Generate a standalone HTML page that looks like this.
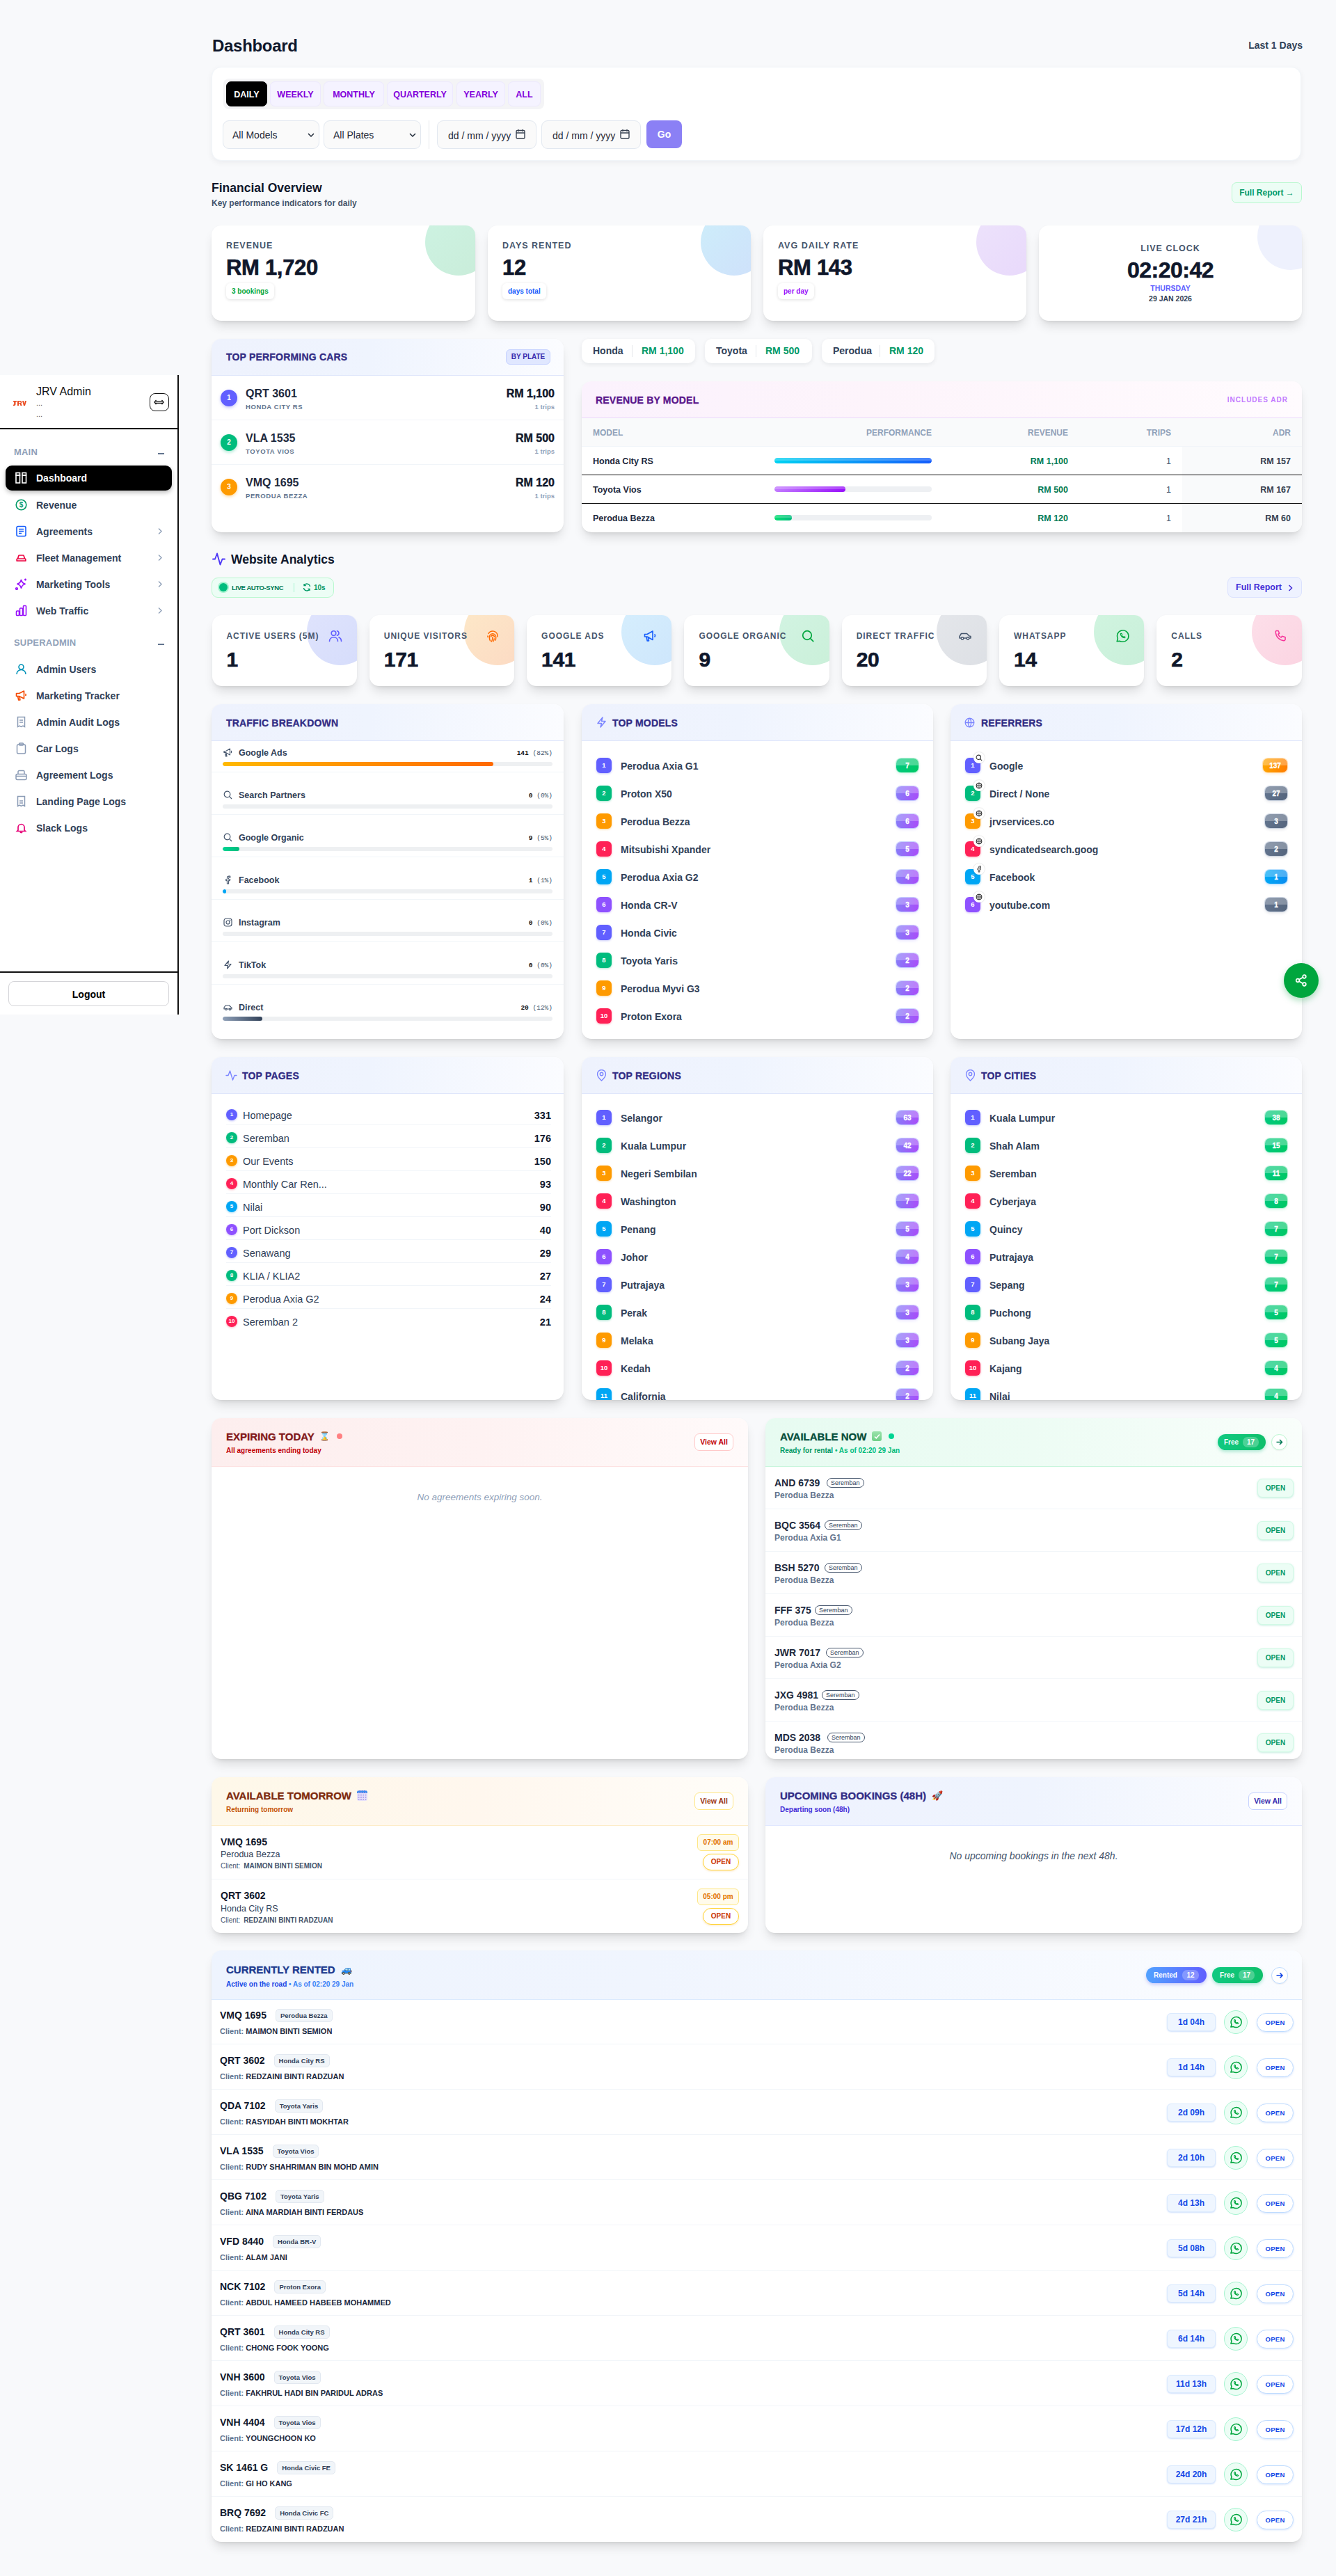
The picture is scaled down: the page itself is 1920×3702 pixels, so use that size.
<!DOCTYPE html>
<html><head><meta charset="utf-8">
<style>
*{box-sizing:border-box;margin:0;padding:0}
html,body{width:1920px;height:3702px;overflow:hidden}
body{background:#f8f9fb;font-family:"Liberation Sans",sans-serif;color:#0f172b;position:relative}
.abs{position:absolute}
.card{position:absolute;background:#fff;border-radius:14px;box-shadow:0 10px 15px -3px rgba(0,0,0,.12),0 4px 6px -4px rgba(0,0,0,.12),0 0 2px rgba(0,0,0,.04);overflow:hidden}
svg{display:block}
/* sidebar */
#side{position:absolute;left:0;top:539px;width:257px;height:919px;background:#fff;border-right:2px solid #111}
.sh{position:absolute;left:0;top:0;width:255px;height:78px;border-bottom:2px solid #111}
.sec{position:absolute;left:20px;font-size:13px;font-weight:700;color:#90a1b9;letter-spacing:.2px}
.secm{position:absolute;left:227px;width:9px;height:2px;background:#62748e}
.nav{position:absolute;left:8px;width:239px;height:35px;border-radius:9px;display:flex;align-items:center;font-size:14px;font-weight:700;color:#314158}
.nav .ic{position:absolute;left:14px;top:9px;width:17px;height:17px}
.nav .tx{position:absolute;left:44px;top:10px}
.nav .chev{position:absolute;left:218px;top:12px}
.nav.on{background:#000;color:#fff;box-shadow:0 3px 6px rgba(0,0,0,.25)}
</style></head>
<body>
<div id="side">
 <div class="sh">
  <svg class="abs" style="left:19px;top:35px" width="19" height="10" viewBox="0 0 19 10" fill="#ea4a1f"><path d="M0 2h5v1.5H3.5V7a2 2 0 01-2 2H0V7.5h1.2V3.5H0z"/><path d="M6 2h4.5a2 2 0 011 3.6L12.5 9h-2l-.9-3H8v3H6zM8 3.5V5h2a.7.7 0 000-1.5z"/><path d="M13 2h2l1 4.5L17 2h2l-2 7h-2z"/></svg>
  <div class="abs" style="left:52px;top:15px;font-size:16px;color:#111">JRV Admin</div>
  <div class="abs" style="left:52px;top:34px;font-size:11px;color:#555">...</div>
  <div class="abs" style="left:52px;top:50px;font-size:11px;color:#555">...</div>
  <div class="abs" style="left:215px;top:26px;width:28px;height:26px;border:1.5px solid #111;border-radius:8px"><svg class="abs" style="left:5px;top:8px" width="15" height="8" viewBox="0 0 15 8" fill="none" stroke="#111" stroke-width="1.3"><path d="M3.5 1L1 4l2.5 3M11.5 1L14 4l-2.5 3M2 2.7h11M2 5.3h11"/></svg></div>
 </div>
 <div class="sec" style="top:103px">MAIN</div><div class="secm" style="top:112px"></div>
 <div class="nav on" style="top:130px;height:36px">
  <svg class="ic" viewBox="0 0 17 17" fill="none" stroke="#fff" stroke-width="1.6"><rect x="1" y="1.5" width="5.5" height="3.5"/><rect x="1" y="5" width="5.5" height="11"/><rect x="10" y="1.5" width="5.5" height="3.5"/><rect x="10" y="5" width="5.5" height="11"/></svg>
  <span class="tx">Dashboard</span></div>
 <div class="nav" style="top:169px">
  <svg class="ic" viewBox="0 0 17 17" fill="none" stroke="#009966" stroke-width="1.6"><circle cx="8.5" cy="8.5" r="7.3"/><text x="8.5" y="12.2" font-size="10" font-weight="700" text-anchor="middle" fill="#009966" stroke="none" font-family="Liberation Sans">$</text></svg>
  <span class="tx">Revenue</span></div>
 <div class="nav" style="top:207px">
  <svg class="ic" viewBox="0 0 17 17" fill="none" stroke="#155dfc" stroke-width="1.6"><rect x="2" y="1.5" width="13" height="14" rx="2"/><path d="M5 5.5h7M5 8.5h7M5 11.5h4"/></svg>
  <span class="tx">Agreements</span><svg class="chev" width="8" height="11" viewBox="0 0 8 11" fill="none" stroke="#90a1b9" stroke-width="1.4"><path d="M2 1.5l4 4-4 4"/></svg></div>
 <div class="nav" style="top:245px">
  <svg class="ic" viewBox="0 0 17 17" fill="none" stroke="#ec003f" stroke-width="1.7" stroke-linejoin="round"><path d="M3.5 10l1.3-4.3a1 1 0 011-.7h5.4a1 1 0 011 .7L13.5 10"/><path d="M3 10h11a.8.8 0 01.8.8V13H2.2v-2.2A.8.8 0 013 10z"/></svg>
  <span class="tx">Fleet Management</span><svg class="chev" width="8" height="11" viewBox="0 0 8 11" fill="none" stroke="#90a1b9" stroke-width="1.4"><path d="M2 1.5l4 4-4 4"/></svg></div>
 <div class="nav" style="top:283px">
  <svg class="ic" viewBox="0 0 17 17" fill="none" stroke="#9810fa" stroke-width="1.6"><path d="M8.5 2c.8 4 2.2 5.5 6 6.3-3.8.8-5.2 2.3-6 6.2-.8-3.9-2.2-5.4-6-6.2 3.8-.8 5.2-2.3 6-6.3z"/><path d="M14.5 .5v3M13 2h3"/><circle cx="2" cy="15" r="1.3"/></svg>
  <span class="tx">Marketing Tools</span><svg class="chev" width="8" height="11" viewBox="0 0 8 11" fill="none" stroke="#90a1b9" stroke-width="1.4"><path d="M2 1.5l4 4-4 4"/></svg></div>
 <div class="nav" style="top:321px">
  <svg class="ic" viewBox="0 0 17 17" fill="none" stroke="#9810fa" stroke-width="1.6"><rect x="1.5" y="9" width="4" height="6.5" rx="1"/><rect x="6.5" y="5" width="4" height="10.5" rx="1"/><rect x="11.5" y="1.5" width="4" height="14" rx="1"/></svg>
  <span class="tx">Web Traffic</span><svg class="chev" width="8" height="11" viewBox="0 0 8 11" fill="none" stroke="#90a1b9" stroke-width="1.4"><path d="M2 1.5l4 4-4 4"/></svg></div>
 <div class="sec" style="top:377px">SUPERADMIN</div><div class="secm" style="top:386px"></div>
 <div class="nav" style="top:405px">
  <svg class="ic" viewBox="0 0 17 17" fill="none" stroke="#0092b8" stroke-width="1.6"><circle cx="8.5" cy="5.5" r="3.5"/><path d="M2 16c0-4 3-6.5 6.5-6.5S15 12 15 16"/></svg>
  <span class="tx">Admin Users</span></div>
 <div class="nav" style="top:443px">
  <svg class="ic" viewBox="0 0 17 17" fill="none" stroke="#f54a00" stroke-width="1.6" stroke-linejoin="round"><path d="M1.5 5.5h4l7-3.5v11l-7-3.5h-4z"/><path d="M3.5 9.5l1.2 5.5h2.2L6 9.5"/><path d="M14.5 6a2 2 0 010 3"/></svg>
  <span class="tx">Marketing Tracker</span></div>
 <div class="nav" style="top:481px">
  <svg class="ic" viewBox="0 0 17 17" fill="none" stroke="#8a9bb5" stroke-width="1.5"><path d="M3.5 1.5h10v14l-2.5-1.5-2.5 1.5-2.5-1.5-2.5 1.5z"/><path d="M6 6h5M6 9h5"/></svg>
  <span class="tx">Admin Audit Logs</span></div>
 <div class="nav" style="top:519px">
  <svg class="ic" viewBox="0 0 17 17" fill="none" stroke="#8a9bb5" stroke-width="1.5"><rect x="2.5" y="3" width="12" height="13" rx="2"/><rect x="5.5" y="1" width="6" height="3" rx="1"/></svg>
  <span class="tx">Car Logs</span></div>
 <div class="nav" style="top:557px">
  <svg class="ic" viewBox="0 0 17 17" fill="none" stroke="#8a9bb5" stroke-width="1.5"><rect x="1" y="7.5" width="15" height="8" rx="2"/><path d="M4 7.5V4a1.5 1.5 0 011.5-1.5h6A1.5 1.5 0 0113 4v3.5M1 10.5h15"/></svg>
  <span class="tx">Agreement Logs</span></div>
 <div class="nav" style="top:595px">
  <svg class="ic" viewBox="0 0 17 17" fill="none" stroke="#8a9bb5" stroke-width="1.5"><path d="M3.5 1.5h10v14l-2.5-1.5-2.5 1.5-2.5-1.5-2.5 1.5z"/><path d="M6 8h5M6 11h5"/></svg>
  <span class="tx">Landing Page Logs</span></div>
 <div class="nav" style="top:633px">
  <svg class="ic" viewBox="0 0 17 17" fill="none" stroke="#e60076" stroke-width="1.7"><path d="M4 12V8a4.5 4.5 0 019 0v4l1.5 1.5h-12z"/><path d="M7 14.5a1.6 1.6 0 003 0"/></svg>
  <span class="tx">Slack Logs</span></div>
 <div class="abs" style="left:0;top:857px;width:255px;border-top:2px solid #111"></div>
 <div class="abs" style="left:12px;top:871px;width:231px;height:36px;border:1px solid #d4d4d8;border-radius:8px;font-size:14px;font-weight:700;color:#000;text-align:center;line-height:36px">Logout</div>
</div>
<style>
.tabs{position:absolute;left:321px;top:113px;width:461px;height:44px;background:#f4f4f6;border-radius:8px}
.tab{position:absolute;top:4px;height:36px;border-radius:7px;background:#f5f3ff;border:1px solid #ede9fe;color:#8200db;font-size:12.5px;font-weight:700;text-align:center;line-height:36px}
.tab.on{background:#000;border-color:#000;color:#fff}
.sel{position:absolute;top:173px;height:41px;border:1px solid #e2e8f0;border-radius:9px;background:#fafafa;font-size:14px;color:#1f2937;line-height:41px;padding-left:13px}
.sel svg{position:absolute;right:6px;top:17px}
.dt{position:absolute;top:173px;height:41px;border:1px solid #e2e8f0;border-radius:9px;background:#fafafa;font-size:14px;color:#1f2937;line-height:42px;padding-left:15px}
.dt svg{position:absolute;left:112px;top:11px}
.kpi .lb{position:absolute;left:21px;top:22px;font-size:12.5px;font-weight:700;letter-spacing:1px;color:#45556c}
.kpi .val{position:absolute;left:21px;top:43px;font-size:31px;font-weight:900;color:#0f172b;letter-spacing:-.3px;-webkit-text-stroke:.6px #0f172b}
.kpi .bd{position:absolute;left:21px;top:83px;height:23px;padding:0 8px;border-radius:6px;background:#fff;box-shadow:0 1px 4px rgba(0,0,0,.13);font-size:10px;line-height:23px!important;font-weight:700;line-height:25px}
.deco{position:absolute;top:-24px;right:-24px;width:96px;height:96px;border-radius:50%}
</style>
<div class="abs" style="left:305px;top:52px;font-size:24px;font-weight:700;color:#0f172b;letter-spacing:-.3px">Dashboard</div>
<div class="abs" style="left:1706px;top:57px;width:166px;text-align:right;font-size:14px;font-weight:700;color:#314158">Last 1 Days</div>
<div class="card" style="left:304px;top:96px;width:1566px;height:135px;box-shadow:0 3px 8px rgba(15,23,42,.05);border:1px solid #f1f5f9"></div>
<div class="tabs">
 <div class="tab on" style="left:4px;width:59px">DAILY</div>
 <div class="tab" style="left:67px;width:73px">WEEKLY</div>
 <div class="tab" style="left:144px;width:87px">MONTHLY</div>
 <div class="tab" style="left:235px;width:95px">QUARTERLY</div>
 <div class="tab" style="left:335px;width:70px">YEARLY</div>
 <div class="tab" style="left:409px;width:47px">ALL</div>
</div>
<div class="sel" style="left:320px;width:139px">All Models<svg width="10" height="7" viewBox="0 0 10 7" fill="none" stroke="#1f2937" stroke-width="1.5"><path d="M1 1l4 4 4-4"/></svg></div>
<div class="sel" style="left:465px;width:140px">All Plates<svg width="10" height="7" viewBox="0 0 10 7" fill="none" stroke="#1f2937" stroke-width="1.5"><path d="M1 1l4 4 4-4"/></svg></div>
<div class="abs" style="left:616px;top:173px;width:1px;height:41px;background:#e5e7eb"></div>
<div class="dt" style="left:628px;width:143px">dd / mm / yyyy<svg width="14" height="15" viewBox="0 0 14 15" fill="none" stroke="#374151" stroke-width="1.4"><rect x="1" y="2.5" width="12" height="11.5" rx="1.5"/><path d="M1 6h12M4 1v3M10 1v3"/></svg></div>
<div class="dt" style="left:778px;width:143px">dd / mm / yyyy<svg width="14" height="15" viewBox="0 0 14 15" fill="none" stroke="#374151" stroke-width="1.4"><rect x="1" y="2.5" width="12" height="11.5" rx="1.5"/><path d="M1 6h12M4 1v3M10 1v3"/></svg></div>
<div class="abs" style="left:929px;top:173px;width:51px;height:40px;border-radius:8px;background:#8b80f5;color:#fff;font-size:14px;font-weight:700;text-align:center;line-height:41px">Go</div>

<div class="abs" style="left:304px;top:260px;font-size:17.5px;font-weight:700;color:#0f172b">Financial Overview</div>
<div class="abs" style="left:304px;top:285px;font-size:12px;font-weight:700;color:#45556c">Key performance indicators for daily</div>
<div class="abs" style="left:1770px;top:262px;width:101px;height:30px;border-radius:7px;background:#ecfdf5;border:1px solid #b9f8cf;color:#009966;font-size:12px;font-weight:700;text-align:center;line-height:28px">Full Report &#8594;</div>

<div class="card kpi" style="left:304px;top:324px;width:379px;height:137px"><div class="deco" style="background:linear-gradient(135deg,#cdf3e2,#c9ecd9)"></div>
 <div class="lb">REVENUE</div><div class="val">RM 1,720</div><div class="bd" style="color:#00a63e">3 bookings</div></div>
<div class="card kpi" style="left:701px;top:324px;width:378px;height:137px"><div class="deco" style="background:linear-gradient(135deg,#cdeefa,#cfe0fb)"></div>
 <div class="lb">DAYS RENTED</div><div class="val">12</div><div class="bd" style="color:#155dfc">days total</div></div>
<div class="card kpi" style="left:1097px;top:324px;width:378px;height:137px"><div class="deco" style="background:linear-gradient(135deg,#ede3fb,#e8d8fb)"></div>
 <div class="lb">AVG DAILY RATE</div><div class="val">RM 143</div><div class="bd" style="color:#9810fa">per day</div></div>
<div class="card kpi" style="left:1493px;top:324px;width:378px;height:137px"><div class="deco" style="background:#eef1fd;top:-32px;right:-32px"></div>
 <div class="abs" style="left:0;width:100%;top:26px;text-align:center;font-size:12.5px;font-weight:700;letter-spacing:1px;color:#45556c">LIVE CLOCK</div>
 <div class="abs" style="left:0;width:100%;top:46px;text-align:center;font-size:32px;font-weight:900;color:#0f172b;letter-spacing:-.5px;-webkit-text-stroke:.6px #0f172b">02:20:42</div>
 <div class="abs" style="left:0;width:100%;top:84px;text-align:center;font-size:10.5px;font-weight:700;color:#615fff">THURSDAY</div>
 <div class="abs" style="left:0;width:100%;top:99px;text-align:center;font-size:10.5px;font-weight:700;color:#314158">29 JAN 2026</div>
</div>
<style>
.hdr{position:absolute;left:0;top:0;width:100%;border-bottom:1px solid #dfe6fb;background:linear-gradient(90deg,#eef2fd 0%,#eff4fe 45%,#fbfcff 100%)}
.htl{position:absolute;font-size:14px;font-weight:900;color:#312c85;letter-spacing:.2px;-webkit-text-stroke:.3px currentColor}
.tpc .row{position:absolute;left:0;width:100%;height:64px;border-bottom:1px solid #f1f5f9}
.tpc .num{position:absolute;left:13px;top:20px;width:24px;height:24px;border-radius:50%;color:#fff;font-size:10px;font-weight:700;text-align:center;line-height:24px}
.tpc .pl{position:absolute;left:49px;top:17px;font-size:16px;font-weight:700;color:#1d293d}
.tpc .md{position:absolute;left:49px;top:39px;font-size:9.5px;font-weight:700;color:#62748e;letter-spacing:.6px}
.tpc .rm{position:absolute;right:13px;top:17px;font-size:16px;font-weight:900;color:#0f172b;-webkit-text-stroke:.4px #0f172b}
.tpc .tr{position:absolute;right:13px;top:39px;font-size:9.5px;font-weight:700;color:#90a1b9}
.chip{position:absolute;top:487px;height:35px;background:#fff;border-radius:10px;box-shadow:0 2px 6px rgba(15,23,42,.08);font-size:14px;font-weight:700;line-height:35px}
.chip .b{position:absolute;left:16px;color:#314158}
.chip .sep{position:absolute;top:9px;width:1px;height:17px;background:#e5e7eb}
.chip .v{position:absolute;color:#009966;font-weight:900}
.rbm .th{position:absolute;top:1px;font-size:12px;font-weight:700;color:#90a1b9;line-height:41px}
.rbm .tr2{position:absolute;left:0;width:100%;height:41px}
.rbm .c{position:absolute;font-size:12.5px;font-weight:700;line-height:42px}
.bar{position:absolute;left:277px;top:16px;width:226px;height:8px;border-radius:4px;background:#eef0f3;overflow:hidden}
.bar i{position:absolute;left:0;top:0;height:8px;border-radius:4px}
.bar i:after{content:"";position:absolute;left:0;top:0;right:0;height:4px;border-radius:4px 4px 0 0;background:rgba(255,255,255,.22)}
</style>
<!-- TOP PERFORMING CARS -->
<div class="card tpc" style="left:304px;top:487px;width:506px;height:278px">
 <div class="hdr" style="height:53px"></div>
 <div class="htl" style="left:21px;top:18px">TOP PERFORMING CARS</div>
 <div class="abs" style="left:423px;top:15px;width:64px;height:22px;border-radius:6px;background:#e0e7ff;border:1px solid #c6d2ff;color:#372aac;font-size:10px;font-weight:900;text-align:center;line-height:20px">BY PLATE</div>
 <div class="row" style="top:53px"><div class="num" style="background:#615fff;box-shadow:0 2px 4px rgba(99,102,241,.35)">1</div><div class="pl">QRT 3601</div><div class="md">HONDA CITY RS</div><div class="rm">RM 1,100</div><div class="tr">1 trips</div></div>
 <div class="row" style="top:117px"><div class="num" style="background:#00bc7d;box-shadow:0 2px 4px rgba(16,185,129,.35)">2</div><div class="pl">VLA 1535</div><div class="md">TOYOTA VIOS</div><div class="rm">RM 500</div><div class="tr">1 trips</div></div>
 <div class="row" style="top:181px;border-bottom:0"><div class="num" style="background:#fe9a00;box-shadow:0 2px 4px rgba(245,158,11,.35)">3</div><div class="pl">VMQ 1695</div><div class="md">PERODUA BEZZA</div><div class="rm">RM 120</div><div class="tr">1 trips</div></div>
</div>
<!-- BRAND CHIPS -->
<div class="chip" style="left:836px;width:163px"><span class="b">Honda</span><span class="sep" style="left:72px"></span><span class="v" style="left:86px">RM 1,100</span></div>
<div class="chip" style="left:1013px;width:154px"><span class="b">Toyota</span><span class="sep" style="left:73px"></span><span class="v" style="left:87px">RM 500</span></div>
<div class="chip" style="left:1181px;width:162px"><span class="b">Perodua</span><span class="sep" style="left:83px"></span><span class="v" style="left:97px">RM 120</span></div>
<!-- REVENUE BY MODEL -->
<div class="card rbm" style="left:836px;top:548px;width:1035px;height:217px">
 <div class="abs" style="left:0;top:0;width:100%;height:53px;border-bottom:1px solid #ead8fb;background:linear-gradient(90deg,#fbf2fd 0%,#fdf4fb 40%,#fffbfe 100%)"></div>
 <div class="htl" style="left:20px;top:19px;color:#59168b">REVENUE BY MODEL</div>
 <div class="abs" style="right:20px;top:21px;font-size:10px;font-weight:700;color:#c27aff;letter-spacing:1px">INCLUDES ADR</div>
 <div class="abs" style="left:0;top:53px;width:100%;height:41px;background:#f9fafb;border-bottom:1px solid #f1f5f9"></div>
 <div class="abs" style="left:863px;top:94px;width:172px;height:123px;background:#f9fafb"></div>
 <div class="abs" style="top:53px;left:0;width:100%;height:41px">
  <span class="th" style="left:16px">MODEL</span>
  <span class="th" style="right:532px">PERFORMANCE</span>
  <span class="th" style="right:336px">REVENUE</span>
  <span class="th" style="right:188px">TRIPS</span>
  <span class="th" style="right:16px">ADR</span>
 </div>
 <div class="tr2" style="top:94px;border-bottom:1.5px solid #111">
  <span class="c" style="left:16px;color:#1d293d">Honda City RS</span>
  <div class="bar"><i style="width:100%;background:linear-gradient(90deg,#00d3f2,#155dfc)"></i></div>
  <span class="c" style="right:336px;color:#007a55">RM 1,100</span>
  <span class="c" style="right:188px;color:#45556c;font-weight:400">1</span>
  <span class="c" style="right:16px;color:#374151">RM 157</span>
 </div>
 <div class="tr2" style="top:135px;border-bottom:1.5px solid #111">
  <span class="c" style="left:16px;color:#1d293d">Toyota Vios</span>
  <div class="bar"><i style="width:45%;background:linear-gradient(90deg,#c27aff,#9810fa)"></i></div>
  <span class="c" style="right:336px;color:#007a55">RM 500</span>
  <span class="c" style="right:188px;color:#45556c;font-weight:400">1</span>
  <span class="c" style="right:16px;color:#374151">RM 167</span>
 </div>
 <div class="tr2" style="top:176px">
  <span class="c" style="left:16px;color:#1d293d">Perodua Bezza</span>
  <div class="bar"><i style="width:11%;background:linear-gradient(90deg,#05df72,#00bc7d)"></i></div>
  <span class="c" style="right:336px;color:#007a55">RM 120</span>
  <span class="c" style="right:188px;color:#45556c;font-weight:400">1</span>
  <span class="c" style="right:16px;color:#374151">RM 60</span>
 </div>
</div>
<style>
.an .lb{position:absolute;left:21px;top:23px;font-size:12px;font-weight:700;letter-spacing:.95px;color:#45556c;white-space:nowrap}
.an .val{position:absolute;left:21px;top:47px;font-size:30px;font-weight:900;color:#0f172b;letter-spacing:-.3px;-webkit-text-stroke:.6px #0f172b}
.an .ic{position:absolute;right:21px;top:20px}
.an .deco{top:-24px;right:-24px;width:96px;height:96px}
.tb .row{position:absolute;left:0;width:100%;height:61px;border-bottom:1px solid #f1f5f9}
.tb .ic{position:absolute;left:17px;top:26px}
.tb .nm{position:absolute;left:39px;top:26px;font-size:12.5px;font-weight:700;color:#314158}
.tb .ct{position:absolute;right:16px;top:28px;font-family:"Liberation Mono",monospace;font-size:9.5px;color:#45556c}
.tb .ct b{color:#111}
.tb .track{position:absolute;left:16px;top:46px;width:474px;height:6px;border-radius:3px;background:#eef0f2;overflow:hidden}
.tb .track i{position:absolute;left:0;top:0;height:6px;border-radius:3px}
.lst .r{position:absolute;left:0;width:100%;height:40px}
.lst .rk{position:absolute;left:21px;top:9px;width:22px;height:22px;border-radius:6px;color:#fff;font-size:9.5px;font-weight:700;text-align:center;line-height:22px}
.lst .nm{position:absolute;left:56px;top:13px;font-size:14px;font-weight:700;color:#314158;white-space:nowrap}
.lst .cnt{position:absolute;right:21px;top:10px;width:32px;height:20px;border-radius:7px;color:#fff;font-size:10px;font-weight:700;text-align:center;line-height:22px;overflow:hidden;-webkit-text-stroke:.3px #fff}
.pur{background:linear-gradient(180deg,rgba(255,255,255,.26) 0 50%,transparent 50%),linear-gradient(100deg,#867ef8,#a94cf9);box-shadow:0 0 0 1px rgba(140,160,255,.45),0 2px 4px rgba(120,100,255,.18)}
.grn{background:linear-gradient(180deg,rgba(255,255,255,.3) 0 50%,transparent 50%),linear-gradient(100deg,#00c97f,#00c864);box-shadow:0 0 0 1px rgba(120,230,180,.45),0 2px 4px rgba(0,200,120,.18)}
.gry{background:linear-gradient(180deg,rgba(255,255,255,.28) 0 50%,transparent 50%),linear-gradient(100deg,#62748e,#55657d);box-shadow:0 0 0 1px rgba(170,185,210,.5),0 2px 4px rgba(70,85,110,.18)}
.org{background:linear-gradient(180deg,rgba(255,255,255,.28) 0 50%,transparent 50%),linear-gradient(100deg,#ffa800,#ff7b00);box-shadow:0 0 0 1px rgba(255,200,120,.5),0 2px 4px rgba(255,140,0,.2)}
.blu{background:linear-gradient(180deg,rgba(255,255,255,.28) 0 50%,transparent 50%),linear-gradient(100deg,#00aaf6,#0a8cf0);box-shadow:0 0 0 1px rgba(130,200,255,.5),0 2px 4px rgba(0,140,240,.2)}
.c1{background:#615fff;box-shadow:0 1px 3px rgba(99,102,241,.4)}
.c2{background:#00bc7d;box-shadow:0 1px 3px rgba(16,185,129,.4)}
.c3{background:#fe9a00;box-shadow:0 1px 3px rgba(245,158,11,.4)}
.c4{background:#ff2056;box-shadow:0 1px 3px rgba(244,63,94,.4)}
.c5{background:#00a6f4;box-shadow:0 1px 3px rgba(14,165,233,.4)}
.c6{background:#8e51ff;box-shadow:0 1px 3px rgba(139,92,246,.4)}
.ov{position:absolute;left:33px;top:1px;width:16px;height:16px;border-radius:50%;background:#fff;box-shadow:0 0 2px rgba(0,0,0,.2)}
.ov svg{position:absolute;left:3px;top:3px}
</style>
<!-- WEBSITE ANALYTICS -->
<svg class="abs" style="left:305px;top:794px" width="19" height="19" viewBox="0 0 19 19" fill="none" stroke="#4f39f6" stroke-width="1.9" stroke-linejoin="round" stroke-linecap="round"><path d="M1 9.5h3l3-8 4.5 16 3-8H18"/></svg>
<div class="abs" style="left:332px;top:794px;font-size:17.5px;font-weight:700;color:#0f172b">Website Analytics</div>
<div class="abs" style="left:304px;top:830px;width:176px;height:29px;border-radius:9px;background:#ecfdf5;border:1px solid #b9f8cf"></div>
<div class="abs" style="left:315px;top:838px;width:12px;height:12px;border-radius:50%;background:#00bc7d;box-shadow:0 0 0 2px #a4f4cf"></div>
<div class="abs" style="left:333px;top:839px;font-size:9.5px;font-weight:900;color:#007a55;letter-spacing:-.4px">LIVE AUTO-SYNC</div>
<div class="abs" style="left:422px;top:838px;width:1px;height:13px;background:#a4f4cf"></div>
<svg class="abs" style="left:435px;top:838px" width="12" height="12" viewBox="0 0 12 12" fill="none" stroke="#009966" stroke-width="1.3"><path d="M10.5 5A4.5 4.5 0 002 3.5M1.5 7A4.5 4.5 0 0010 8.5M2 1v2.7h2.7M10 11V8.3H7.3"/></svg>
<div class="abs" style="left:451px;top:839px;font-size:10px;font-weight:700;color:#009966">10s</div>
<div class="abs" style="left:1764px;top:829px;width:107px;height:30px;border-radius:8px;background:#eef2ff;border:1px solid #dbe2fe;color:#432dd7;font-size:12.5px;font-weight:700;line-height:28px;padding-left:11px">Full Report<svg class="abs" style="left:86px;top:10px" width="7" height="10" viewBox="0 0 7 10" fill="none" stroke="#432dd7" stroke-width="1.5"><path d="M1.5 1l4 4-4 4"/></svg></div>

<div class="card an" style="left:304.5px;top:884px;width:208.3px;height:102px"><div class="deco" style="background:linear-gradient(135deg,#e0e4fd,#d5dcfb)"></div><div class="lb">ACTIVE USERS (5M)</div><div class="val">1</div>
 <svg class="ic" width="20" height="20" viewBox="0 0 20 20" fill="none" stroke="#615fff" stroke-width="1.6" stroke-linecap="round"><circle cx="7.5" cy="6" r="3.3"/><path d="M1.5 17.5c0-3.5 2.7-5.8 6-5.8s6 2.3 6 5.8"/><path d="M12.5 2.8a3.3 3.3 0 010 6.4M15 12c2 .8 3.5 2.6 3.5 5.5"/></svg></div>
<div class="card an" style="left:530.8px;top:884px;width:208.3px;height:102px"><div class="deco" style="background:linear-gradient(135deg,#fde9c8,#fcd9c3)"></div><div class="lb">UNIQUE VISITORS</div><div class="val">171</div>
 <svg class="ic" width="20" height="20" viewBox="0 0 20 20" fill="none" stroke="#ff6900" stroke-width="1.5" stroke-linecap="round"><path d="M4 6.5A7 7 0 0117 9v2"/><path d="M3 10v1.5M6.5 17c-.8-1.5-1.2-3.5-1.2-5.5a4.7 4.7 0 019.4 0c0 1.5-.1 3-.5 4.5"/><path d="M10 11.5c0 2.5-.5 4.5-1.5 6.5M12.2 14c-.2 1.2-.5 2.5-1 3.5M7.6 11.3a2.4 2.4 0 014.8 0"/></svg></div>
<div class="card an" style="left:757.1px;top:884px;width:208.3px;height:102px"><div class="deco" style="background:linear-gradient(135deg,#d6effd,#cde5fc)"></div><div class="lb">GOOGLE ADS</div><div class="val">141</div>
 <svg class="ic" width="20" height="20" viewBox="0 0 20 20" fill="none" stroke="#155dfc" stroke-width="1.6" stroke-linejoin="round"><path d="M2.5 7.5h3.5l8-4.5v12.5l-8-4.5H2.5z"/><path d="M5 11l1.2 6h2.3L7.5 11"/><path d="M16.5 7.5a2.5 2.5 0 010 4"/></svg></div>
<div class="card an" style="left:983.4px;top:884px;width:208.3px;height:102px"><div class="deco" style="background:linear-gradient(135deg,#d3f4e3,#c9efd8)"></div><div class="lb">GOOGLE ORGANIC</div><div class="val">9</div>
 <svg class="ic" width="20" height="20" viewBox="0 0 20 20" fill="none" stroke="#00a63e" stroke-width="1.7" stroke-linecap="round"><circle cx="9" cy="9" r="6.3"/><path d="M13.7 13.7l4 4"/></svg></div>
<div class="card an" style="left:1209.7px;top:884px;width:208.3px;height:102px"><div class="deco" style="background:linear-gradient(135deg,#e5e7eb,#dcdfe4)"></div><div class="lb">DIRECT TRAFFIC</div><div class="val">20</div>
 <svg class="ic" width="20" height="20" viewBox="0 0 20 20" fill="none" stroke="#45556c" stroke-width="1.5" stroke-linejoin="round"><path d="M2 13v-2.5l2.5-4h8l3.5 3.5 2 .5V13z"/><circle cx="6" cy="13.5" r="1.7" fill="#fff"/><circle cx="14" cy="13.5" r="1.7" fill="#fff"/></svg></div>
<div class="card an" style="left:1436px;top:884px;width:208.3px;height:102px"><div class="deco" style="background:linear-gradient(135deg,#d1f5e0,#c8eed9)"></div><div class="lb">WHATSAPP</div><div class="val">14</div>
 <svg class="ic" width="22" height="22" viewBox="0 0 24 24" style="right:20px;top:19px" fill="none" stroke="#00a63e" stroke-width="1.7" stroke-linejoin="round"><path d="M3.5 20.5l1.3-4.2A9 9 0 1112 21a9 9 0 01-4.3-1.1z"/><path d="M9 8.5c0 3.5 3 6.5 6.5 6.5l1-1.3-2-1-.8.8c-1-.4-2.3-1.7-2.8-2.8l.8-.8-1-2L9.5 8z" stroke-width="1.2"/></svg></div>
<div class="card an" style="left:1662.3px;top:884px;width:208.3px;height:102px"><div class="deco" style="background:linear-gradient(135deg,#fde0ea,#fbd3e1)"></div><div class="lb">CALLS</div><div class="val">2</div>
 <svg class="ic" width="20" height="20" viewBox="0 0 24 24" fill="none" stroke="#f6339a" stroke-width="1.8" stroke-linejoin="round"><path d="M5 3h3.5l1.8 4.5-2.3 1.5a11 11 0 005.5 5.5l1.5-2.3L20.5 14v3.5A2.5 2.5 0 0118 20 15 15 0 014 6a2.5 2.5 0 011-3z"/></svg></div>
<!-- TRAFFIC BREAKDOWN -->
<div class="card tb" style="left:304px;top:1012px;width:506px;height:481px">
 <div class="hdr" style="height:53px"></div>
 <div class="htl" style="left:21px;top:19px">TRAFFIC BREAKDOWN</div>
 <div class="row" style="top:37px"><svg class="ic" width="13" height="13" viewBox="0 0 13 13" fill="none" stroke="#45556c" stroke-width="1.2" stroke-linejoin="round"><path d="M1 4.5h2.5l6-3.5v9l-6-3.5H1z"/><path d="M2.5 7.5l1 4.5h1.5l-1-4.5M11 4a2 2 0 010 3"/></svg><span class="nm">Google Ads</span><span class="ct"><b>141</b> (82%)</span><div class="track"><i style="width:82%;background:linear-gradient(90deg,#ffb900,#ff6900)"></i></div></div>
 <div class="row" style="top:98px"><svg class="ic" width="13" height="13" viewBox="0 0 13 13" fill="none" stroke="#45556c" stroke-width="1.2"><circle cx="5.5" cy="5.5" r="4.3"/><path d="M8.7 8.7l3.3 3.3"/></svg><span class="nm">Search Partners</span><span class="ct"><b>0</b> (0%)</span><div class="track"></div></div>
 <div class="row" style="top:159px"><svg class="ic" width="13" height="13" viewBox="0 0 13 13" fill="none" stroke="#45556c" stroke-width="1.2"><circle cx="5.5" cy="5.5" r="4.3"/><path d="M8.7 8.7l3.3 3.3"/></svg><span class="nm">Google Organic</span><span class="ct"><b>9</b> (5%)</span><div class="track"><i style="width:5%;background:linear-gradient(90deg,#00d492,#00bc7d)"></i></div></div>
 <div class="row" style="top:220px"><svg class="ic" width="13" height="13" viewBox="0 0 24 24" fill="none" stroke="#45556c" stroke-width="2" stroke-linejoin="round"><path d="M18 2h-3a5 5 0 00-5 5v3H7v4h3v8h4v-8h3l1-4h-4V7a1 1 0 011-1h3z"/></svg><span class="nm">Facebook</span><span class="ct"><b>1</b> (1%)</span><div class="track"><i style="width:1%;background:#00a6f4"></i></div></div>
 <div class="row" style="top:281px"><svg class="ic" width="13" height="13" viewBox="0 0 13 13" fill="none" stroke="#45556c" stroke-width="1.2"><rect x="1" y="1" width="11" height="11" rx="3"/><circle cx="6.5" cy="6.5" r="2.5"/><circle cx="9.6" cy="3.4" r=".3"/></svg><span class="nm">Instagram</span><span class="ct"><b>0</b> (0%)</span><div class="track"></div></div>
 <div class="row" style="top:342px"><svg class="ic" width="13" height="13" viewBox="0 0 13 13" fill="none" stroke="#45556c" stroke-width="1.2" stroke-linejoin="round"><path d="M7.5 1L2 7.5h4.5L5.5 12 11 5.5H6.5z"/></svg><span class="nm">TikTok</span><span class="ct"><b>0</b> (0%)</span><div class="track"></div></div>
 <div class="row" style="top:403px;border-bottom:0"><svg class="ic" width="13" height="13" viewBox="0 0 13 13" fill="none" stroke="#45556c" stroke-width="1.2" stroke-linejoin="round"><path d="M1 9V7l2-3h5.5l2.5 2.5 1 .5V9z"/><circle cx="4" cy="9.5" r="1.2" fill="#fff"/><circle cx="9.5" cy="9.5" r="1.2" fill="#fff"/></svg><span class="nm">Direct</span><span class="ct"><b>20</b> (12%)</span><div class="track"><i style="width:12%;background:linear-gradient(90deg,#90a1b9,#314158)"></i></div></div>
</div>
<!-- TOP MODELS -->
<div class="card lst" style="left:836px;top:1012px;width:505px;height:481px">
 <div class="hdr" style="height:53px"></div>
 <svg class="abs" style="left:21px;top:18px" width="15" height="16" viewBox="0 0 15 16" fill="none" stroke="#7c86ff" stroke-width="1.5" stroke-linejoin="round"><path d="M9 1L2 9.5h5.5L6 15l7-8.5H7.5z"/></svg>
 <div class="htl" style="left:44px;top:19px">TOP MODELS</div>
 <div class="r" style="top:68px"><div class="rk c1">1</div><span class="nm">Perodua Axia G1</span><div class="cnt grn">7</div></div>
 <div class="r" style="top:108px"><div class="rk c2">2</div><span class="nm">Proton X50</span><div class="cnt pur">6</div></div>
 <div class="r" style="top:148px"><div class="rk c3">3</div><span class="nm">Perodua Bezza</span><div class="cnt pur">6</div></div>
 <div class="r" style="top:188px"><div class="rk c4">4</div><span class="nm">Mitsubishi Xpander</span><div class="cnt pur">5</div></div>
 <div class="r" style="top:228px"><div class="rk c5">5</div><span class="nm">Perodua Axia G2</span><div class="cnt pur">4</div></div>
 <div class="r" style="top:268px"><div class="rk c6">6</div><span class="nm">Honda CR-V</span><div class="cnt pur">3</div></div>
 <div class="r" style="top:308px"><div class="rk c1">7</div><span class="nm">Honda Civic</span><div class="cnt pur">3</div></div>
 <div class="r" style="top:348px"><div class="rk c2">8</div><span class="nm">Toyota Yaris</span><div class="cnt pur">2</div></div>
 <div class="r" style="top:388px"><div class="rk c3">9</div><span class="nm">Perodua Myvi G3</span><div class="cnt pur">2</div></div>
 <div class="r" style="top:428px"><div class="rk c4">10</div><span class="nm">Proton Exora</span><div class="cnt pur">2</div></div>
</div>
<!-- REFERRERS -->
<div class="card lst" style="left:1366px;top:1012px;width:505px;height:481px">
 <div class="hdr" style="height:53px"></div>
 <svg class="abs" style="left:20px;top:19px" width="15" height="15" viewBox="0 0 15 15" fill="none" stroke="#7c86ff" stroke-width="1.3"><circle cx="7.5" cy="7.5" r="6.3"/><path d="M1.2 7.5h12.6M7.5 1.2c-3 3.5-3 9.1 0 12.6M7.5 1.2c3 3.5 3 9.1 0 12.6"/></svg>
 <div class="htl" style="left:44px;top:19px">REFERRERS</div>
 <div class="r" style="top:68px"><div class="rk c1">1</div><div class="ov"><svg width="10" height="10" viewBox="0 0 10 10" fill="none" stroke="#333" stroke-width="1.1"><circle cx="4.3" cy="4.3" r="3.2"/><path d="M6.7 6.7l2.5 2.5"/></svg></div><span class="nm">Google</span><div class="cnt org" style="width:35px">137</div></div>
 <div class="r" style="top:108px"><div class="rk c2">2</div><div class="ov"><svg width="10" height="10" viewBox="0 0 10 10" fill="none" stroke="#333" stroke-width="1"><circle cx="5" cy="5" r="4"/><path d="M1 5h8M5 1c-2 2.2-2 5.8 0 8M5 1c2 2.2 2 5.8 0 8"/></svg></div><span class="nm">Direct / None</span><div class="cnt gry">27</div></div>
 <div class="r" style="top:148px"><div class="rk c3">3</div><div class="ov"><svg width="10" height="10" viewBox="0 0 10 10" fill="none" stroke="#333" stroke-width="1"><circle cx="5" cy="5" r="4"/><path d="M1 5h8M5 1c-2 2.2-2 5.8 0 8M5 1c2 2.2 2 5.8 0 8"/></svg></div><span class="nm">jrvservices.co</span><div class="cnt gry">3</div></div>
 <div class="r" style="top:188px"><div class="rk c4">4</div><div class="ov"><svg width="10" height="10" viewBox="0 0 10 10" fill="none" stroke="#333" stroke-width="1"><circle cx="5" cy="5" r="4"/><path d="M1 5h8M5 1c-2 2.2-2 5.8 0 8M5 1c2 2.2 2 5.8 0 8"/></svg></div><span class="nm">syndicatedsearch.goog</span><div class="cnt gry">2</div></div>
 <div class="r" style="top:228px"><div class="rk c5">5</div><div class="ov"><svg width="10" height="10" viewBox="0 0 24 24" fill="none" stroke="#333" stroke-width="2.2" stroke-linejoin="round"><path d="M18 2h-3a5 5 0 00-5 5v3H7v4h3v8h4v-8h3l1-4h-4V7a1 1 0 011-1h3z"/></svg></div><span class="nm">Facebook</span><div class="cnt blu">1</div></div>
 <div class="r" style="top:268px"><div class="rk c6">6</div><div class="ov"><svg width="10" height="10" viewBox="0 0 10 10" fill="none" stroke="#333" stroke-width="1"><circle cx="5" cy="5" r="4"/><path d="M1 5h8M5 1c-2 2.2-2 5.8 0 8M5 1c2 2.2 2 5.8 0 8"/></svg></div><span class="nm">youtube.com</span><div class="cnt gry">1</div></div>
</div>
<div class="abs" style="left:1845px;top:1384px;width:50px;height:50px;border-radius:50%;background:#00a63e;box-shadow:0 4px 10px rgba(22,163,74,.35)"><svg class="abs" style="left:15px;top:15px" width="20" height="20" viewBox="0 0 20 20" fill="none" stroke="#fff" stroke-width="1.7"><circle cx="14.5" cy="4.5" r="2.3"/><circle cx="5" cy="10" r="2.3"/><circle cx="14.5" cy="15.5" r="2.3"/><path d="M7 8.8l5.5-3.2M7 11.2l5.5 3.2"/></svg></div>
<style>
.tp .r{position:absolute;left:21px;width:467px;height:33px;border-bottom:1px solid #f1f5f9}
.tp .rk{position:absolute;left:0px;top:10px;width:16px;height:16px;border-radius:50%;color:#fff;font-size:8px;font-weight:700;text-align:center;line-height:16px}
.tp .nm{position:absolute;left:24px;top:11px;font-size:14.5px;color:#314158}
.tp .v{position:absolute;right:0px;top:11px;font-size:14.5px;font-weight:700;color:#0f172b}
</style>
<!-- TOP PAGES -->
<div class="card tp" style="left:304px;top:1519px;width:506px;height:493px">
 <div class="hdr" style="height:53px"></div>
 <svg class="abs" style="left:20px;top:18px" width="17" height="17" viewBox="0 0 17 17" fill="none" stroke="#7c86ff" stroke-width="1.4" stroke-linejoin="round" stroke-linecap="round"><path d="M1 8.5h3l2.5-6.5 4 13 2.5-6.5H16"/></svg>
 <div class="htl" style="left:44px;top:19px">TOP PAGES</div>
 <div class="r" style="top:65px"><div class="rk c1">1</div><span class="nm">Homepage</span><span class="v">331</span></div>
 <div class="r" style="top:98px"><div class="rk c2">2</div><span class="nm">Seremban</span><span class="v">176</span></div>
 <div class="r" style="top:131px"><div class="rk c3">3</div><span class="nm">Our Events</span><span class="v">150</span></div>
 <div class="r" style="top:164px"><div class="rk c4">4</div><span class="nm">Monthly Car Ren...</span><span class="v">93</span></div>
 <div class="r" style="top:197px"><div class="rk c5">5</div><span class="nm">Nilai</span><span class="v">90</span></div>
 <div class="r" style="top:230px"><div class="rk c6">6</div><span class="nm">Port Dickson</span><span class="v">40</span></div>
 <div class="r" style="top:263px"><div class="rk c1">7</div><span class="nm">Senawang</span><span class="v">29</span></div>
 <div class="r" style="top:296px"><div class="rk c2">8</div><span class="nm">KLIA / KLIA2</span><span class="v">27</span></div>
 <div class="r" style="top:329px"><div class="rk c3">9</div><span class="nm">Perodua Axia G2</span><span class="v">24</span></div>
 <div class="r" style="top:362px;border-bottom:0"><div class="rk c4">10</div><span class="nm">Seremban 2</span><span class="v">21</span></div>
</div>
<!-- TOP REGIONS -->
<div class="card lst" style="left:836px;top:1519px;width:505px;height:493px">
 <div class="hdr" style="height:53px"></div>
 <svg class="abs" style="left:21px;top:18px" width="15" height="17" viewBox="0 0 15 17" fill="none" stroke="#7c86ff" stroke-width="1.4"><path d="M7.5 16s6-5.3 6-9.5a6 6 0 00-12 0c0 4.2 6 9.5 6 9.5z"/><circle cx="7.5" cy="6.5" r="2.2"/></svg>
 <div class="htl" style="left:44px;top:19px">TOP REGIONS</div>
 <div class="r" style="top:67px"><div class="rk c1">1</div><span class="nm">Selangor</span><div class="cnt pur">63</div></div>
 <div class="r" style="top:107px"><div class="rk c2">2</div><span class="nm">Kuala Lumpur</span><div class="cnt pur">42</div></div>
 <div class="r" style="top:147px"><div class="rk c3">3</div><span class="nm">Negeri Sembilan</span><div class="cnt pur">22</div></div>
 <div class="r" style="top:187px"><div class="rk c4">4</div><span class="nm">Washington</span><div class="cnt pur">7</div></div>
 <div class="r" style="top:227px"><div class="rk c5">5</div><span class="nm">Penang</span><div class="cnt pur">5</div></div>
 <div class="r" style="top:267px"><div class="rk c6">6</div><span class="nm">Johor</span><div class="cnt pur">4</div></div>
 <div class="r" style="top:307px"><div class="rk c1">7</div><span class="nm">Putrajaya</span><div class="cnt pur">3</div></div>
 <div class="r" style="top:347px"><div class="rk c2">8</div><span class="nm">Perak</span><div class="cnt pur">3</div></div>
 <div class="r" style="top:387px"><div class="rk c3">9</div><span class="nm">Melaka</span><div class="cnt pur">3</div></div>
 <div class="r" style="top:427px"><div class="rk c4">10</div><span class="nm">Kedah</span><div class="cnt pur">2</div></div>
 <div class="r" style="top:467px"><div class="rk c5">11</div><span class="nm">California</span><div class="cnt pur">2</div></div>
</div>
<!-- TOP CITIES -->
<div class="card lst" style="left:1366px;top:1519px;width:505px;height:493px">
 <div class="hdr" style="height:53px"></div>
 <svg class="abs" style="left:21px;top:18px" width="15" height="17" viewBox="0 0 15 17" fill="none" stroke="#7c86ff" stroke-width="1.4"><path d="M7.5 16s6-5.3 6-9.5a6 6 0 00-12 0c0 4.2 6 9.5 6 9.5z"/><circle cx="7.5" cy="6.5" r="2.2"/></svg>
 <div class="htl" style="left:44px;top:19px">TOP CITIES</div>
 <div class="r" style="top:67px"><div class="rk c1">1</div><span class="nm">Kuala Lumpur</span><div class="cnt grn">38</div></div>
 <div class="r" style="top:107px"><div class="rk c2">2</div><span class="nm">Shah Alam</span><div class="cnt grn">15</div></div>
 <div class="r" style="top:147px"><div class="rk c3">3</div><span class="nm">Seremban</span><div class="cnt grn">11</div></div>
 <div class="r" style="top:187px"><div class="rk c4">4</div><span class="nm">Cyberjaya</span><div class="cnt grn">8</div></div>
 <div class="r" style="top:227px"><div class="rk c5">5</div><span class="nm">Quincy</span><div class="cnt grn">7</div></div>
 <div class="r" style="top:267px"><div class="rk c6">6</div><span class="nm">Putrajaya</span><div class="cnt grn">7</div></div>
 <div class="r" style="top:307px"><div class="rk c1">7</div><span class="nm">Sepang</span><div class="cnt grn">7</div></div>
 <div class="r" style="top:347px"><div class="rk c2">8</div><span class="nm">Puchong</span><div class="cnt grn">5</div></div>
 <div class="r" style="top:387px"><div class="rk c3">9</div><span class="nm">Subang Jaya</span><div class="cnt grn">5</div></div>
 <div class="r" style="top:427px"><div class="rk c4">10</div><span class="nm">Kajang</span><div class="cnt grn">4</div></div>
 <div class="r" style="top:467px"><div class="rk c5">11</div><span class="nm">Nilai</span><div class="cnt grn">4</div></div>
</div>
<style>
.bh{position:absolute;left:0;top:0;width:100%}
.bt{position:absolute;left:21px;top:16px;height:20px;font-size:15px;font-weight:900;letter-spacing:0;white-space:nowrap;-webkit-text-stroke:.3px currentColor}
.bs{position:absolute;left:21px;top:41px;font-size:10px;font-weight:700;white-space:nowrap}
.va{position:absolute;top:22px;right:21px;width:56px;height:25px;border-radius:7px;background:#fff;font-size:10.5px;font-weight:700;text-align:center;line-height:23px}
.av .r{position:absolute;left:0;width:100%;height:61px;border-bottom:1px solid #f1f5f9}
.av .pl{position:absolute;left:13px;top:15px;font-size:14px;font-weight:700;color:#1d293d}
.av .loc{position:absolute;top:16px;height:14px;border:1px solid #45556c;border-radius:7px;font-size:9px;color:#314158;line-height:12px;padding:0 5px}
.av .md{position:absolute;left:13px;top:34px;font-size:12px;font-weight:700;color:#62748e}
.av .op{position:absolute;right:12px;top:17px;width:52px;height:27px;border-radius:7px;background:#ecfdf5;border:1px solid #d1fae5;box-shadow:0 1px 3px rgba(16,185,129,.25);color:#009966;font-size:10px;font-weight:700;text-align:center;line-height:25px}
.cr .r{position:absolute;left:0;width:100%;height:65px;border-bottom:1px solid #f1f5f9}
.cr .pl{position:absolute;left:12px;top:13px;height:20px;display:flex;align-items:center;font-size:14px;font-weight:700;color:#0f172b;white-space:nowrap}
.cr .mc{margin-left:13px;height:19px;border:1px solid #e2e8f0;background:#f1f5f9;border-radius:5px;font-size:9.5px;font-weight:700;color:#314158;line-height:17px;padding:0 6px}
.cr .cl{position:absolute;left:12px;top:40px;font-size:11px;font-weight:700;color:#1d293d;white-space:nowrap}
.cr .cl span{color:#62748e}
.cr .du{position:absolute;right:124px;top:20px;width:70px;height:26px;border-radius:6px;background:#eff6ff;border:1px solid #dbeafe;box-shadow:0 1px 2px rgba(59,130,246,.25);color:#1447e6;font-size:12px;font-weight:700;text-align:center;line-height:24px}
.cr .wa{position:absolute;right:78px;top:16px;width:34px;height:34px;border-radius:50%;background:#ecfdf5;border:1px solid #a4f4cf}
.cr .wa svg{position:absolute;left:6px;top:6px}
.cr .op{position:absolute;right:12px;top:20px;width:53px;height:27px;border-radius:14px;background:#fff;border:1px solid #bedbff;box-shadow:0 1px 3px rgba(59,130,246,.2);color:#1447e6;font-size:9.5px;font-weight:700;text-align:center;line-height:25px;letter-spacing:.3px}
</style>
<!-- EXPIRING TODAY -->
<div class="card" style="left:304px;top:2038px;width:771px;height:490px">
 <div class="bh" style="height:70px;border-bottom:1px solid #fde2e2;background:linear-gradient(90deg,#fdeeee 0%,#fef2f2 50%,#fffafa 100%)"></div>
 <div class="bt" style="color:#82181a;display:flex;align-items:center">EXPIRING TODAY<span style="font-size:12px;letter-spacing:0;margin-left:7px">&#8987;</span><span style="margin-left:10px;width:8px;height:8px;border-radius:50%;background:#ff6467;opacity:.8"></span></div>
 <div class="bs" style="color:#c10007">All agreements ending today</div>
 <div class="va" style="border:1px solid #ffc9c9;color:#c10007">View All</div>
 <div class="abs" style="left:0;width:100%;top:106px;text-align:center;font-size:13.5px;font-style:italic;color:#90a1b9">No agreements expiring soon.</div>
</div>
<!-- AVAILABLE NOW -->
<div class="card av" style="left:1100px;top:2038px;width:771px;height:490px">
 <div class="bh" style="height:70px;border-bottom:1px solid #c8f5dc;background:linear-gradient(90deg,#e7fbf1 0%,#edfcf4 50%,#f9fefb 100%)"></div>
 <div class="bt" style="color:#064e3b;display:flex;align-items:center">AVAILABLE NOW<span style="position:relative;margin-left:8px;width:14px;height:14px;border-radius:3px;background:linear-gradient(180deg,#9be3ab,#6fcf87)"><svg class="abs" style="left:3px;top:3px" width="9" height="9" viewBox="0 0 9 9" fill="none" stroke="#fff" stroke-width="1.6"><path d="M1 4.5l2.3 2.3L8 1.5"/></svg></span><span style="margin-left:10px;width:8px;height:8px;border-radius:50%;background:#00d492"></span></div>
 <div class="bs" style="color:#009966">Ready for rental <span style="color:#00bc7d;font-weight:700">&#8226; As of 02:20 29 Jan</span></div>
 <div class="abs" style="left:650px;top:23px;width:69px;height:23px;border-radius:12px;background:linear-gradient(90deg,#10c981,#0fbf6a);box-shadow:0 2px 5px rgba(16,185,129,.35);color:#fff;font-size:10px;font-weight:700;line-height:23px;padding-left:9px">Free<span class="abs" style="left:36px;top:4px;width:23px;height:15px;border-radius:7px;background:rgba(255,255,255,.25);text-align:center;line-height:15px">17</span></div>
 <div class="abs" style="left:727px;top:23px;width:23px;height:23px;border-radius:50%;background:#fff;border:1px solid #b9f8cf;box-shadow:0 1px 2px rgba(0,0,0,.06)"><svg class="abs" style="left:5px;top:5px" width="11" height="11" viewBox="0 0 11 11" fill="none" stroke="#007a55" stroke-width="1.5"><path d="M1.5 5.5h8M6 2l3.5 3.5L6 9"/></svg></div>
 <div class="r" style="top:70px"><span class="pl">AND 6739</span><span class="loc" style="left:88px">Seremban</span><span class="md">Perodua Bezza</span><div class="op">OPEN</div></div>
 <div class="r" style="top:131px"><span class="pl">BQC 3564</span><span class="loc" style="left:85px">Seremban</span><span class="md">Perodua Axia G1</span><div class="op">OPEN</div></div>
 <div class="r" style="top:192px"><span class="pl">BSH 5270</span><span class="loc" style="left:85px">Seremban</span><span class="md">Perodua Bezza</span><div class="op">OPEN</div></div>
 <div class="r" style="top:253px"><span class="pl">FFF 375</span><span class="loc" style="left:71px">Seremban</span><span class="md">Perodua Bezza</span><div class="op">OPEN</div></div>
 <div class="r" style="top:314px"><span class="pl">JWR 7017</span><span class="loc" style="left:87px">Seremban</span><span class="md">Perodua Axia G2</span><div class="op">OPEN</div></div>
 <div class="r" style="top:375px"><span class="pl">JXG 4981</span><span class="loc" style="left:81px">Seremban</span><span class="md">Perodua Bezza</span><div class="op">OPEN</div></div>
 <div class="r" style="top:436px"><span class="pl">MDS 2038</span><span class="loc" style="left:89px">Seremban</span><span class="md">Perodua Bezza</span><div class="op">OPEN</div></div>
</div>
<!-- AVAILABLE TOMORROW -->
<div class="card" style="left:304px;top:2554px;width:771px;height:224px">
 <div class="bh" style="height:70px;border-bottom:1px solid #fdecc8;background:linear-gradient(90deg,#fef8e9 0%,#fff7ee 50%,#fffdf9 100%)"></div>
 <div class="bt" style="color:#7e2a0c;display:flex;align-items:center">AVAILABLE TOMORROW<span style="margin-left:8px;width:15px;height:15px;border-radius:3px;background:radial-gradient(circle,#a89be8 0.8px,transparent 1.2px) 1px 5px/3.3px 3.3px,linear-gradient(180deg,#3b8cf0 0 28%,#e6e0fb 28%)"></span></div>
 <div class="bs" style="color:#c4540c">Returning tomorrow</div>
 <div class="va" style="border:1px solid #fee685;color:#9a3412">View All</div>
 <div class="abs" style="left:0;top:69px;width:100%;height:78px;border-bottom:1px solid #f1f5f9"></div>
 <div class="abs" style="left:13px;top:85px;font-size:14px;font-weight:700;color:#0f172b">VMQ 1695</div>
 <div class="abs" style="left:13px;top:104px;font-size:12.5px;color:#314158">Perodua Bezza</div>
 <div class="abs" style="left:13px;top:122px;font-size:10px;color:#45556c;white-space:nowrap">Client: <b style="margin-left:2px">MAIMON BINTI SEMION</b></div>
 <div class="abs" style="left:698px;top:82px;width:60px;height:24px;border-radius:6px;background:#fffbeb;border:1px solid #fee685;color:#e17100;font-size:10px;font-weight:700;text-align:center;line-height:22px">07:00 am</div>
 <div class="abs" style="left:706px;top:110px;width:52px;height:24px;border-radius:12px;background:#fff;border:1px solid #ffd230;box-shadow:0 1px 3px rgba(245,158,11,.25);color:#ca3500;font-size:10px;font-weight:700;text-align:center;line-height:22px">OPEN</div>
 <div class="abs" style="left:13px;top:162px;font-size:14px;font-weight:700;color:#0f172b">QRT 3602</div>
 <div class="abs" style="left:13px;top:182px;font-size:12.5px;color:#314158">Honda City RS</div>
 <div class="abs" style="left:13px;top:200px;font-size:10px;color:#45556c;white-space:nowrap">Client: <b style="margin-left:2px">REDZAINI BINTI RADZUAN</b></div>
 <div class="abs" style="left:698px;top:160px;width:60px;height:24px;border-radius:6px;background:#fffbeb;border:1px solid #fee685;color:#e17100;font-size:10px;font-weight:700;text-align:center;line-height:22px">05:00 pm</div>
 <div class="abs" style="left:706px;top:188px;width:52px;height:24px;border-radius:12px;background:#fff;border:1px solid #ffd230;box-shadow:0 1px 3px rgba(245,158,11,.25);color:#ca3500;font-size:10px;font-weight:700;text-align:center;line-height:22px">OPEN</div>
</div>
<!-- UPCOMING BOOKINGS -->
<div class="card" style="left:1100px;top:2554px;width:771px;height:224px">
 <div class="bh" style="height:70px;border-bottom:1px solid #e0e7ff;background:linear-gradient(90deg,#eef2fe 0%,#eff4fe 50%,#fbfcff 100%)"></div>
 <div class="bt" style="color:#312c85;display:flex;align-items:center">UPCOMING BOOKINGS (48H)<span style="margin-left:8px;font-size:13px;letter-spacing:0">&#128640;</span></div>
 <div class="bs" style="color:#432dd7">Departing soon (48h)</div>
 <div class="va" style="border:1px solid #c6d2ff;color:#372aac">View All</div>
 <div class="abs" style="left:0;width:100%;top:105px;text-align:center;font-size:14px;font-style:italic;color:#45556c">No upcoming bookings in the next 48h.</div>
</div>
<!-- CURRENTLY RENTED -->
<div class="card cr" style="left:304px;top:2803px;width:1567px;height:850px">
 <div class="bh" style="height:71px;border-bottom:1px solid #dbeafe;background:linear-gradient(90deg,#eef4fe 0%,#f0f5fe 40%,#fafcff 100%)"></div>
 <div class="bt" style="color:#1c398e;display:flex;align-items:center;top:17px">CURRENTLY RENTED<span style="margin-left:8px;font-size:13px;letter-spacing:0">&#128665;</span></div>
 <div class="bs" style="color:#1447e6;top:43px">Active on the road <span style="color:#3b82f6">&#8226; As of 02:20 29 Jan</span></div>
 <div class="abs" style="left:1343px;top:24px;width:87px;height:23px;border-radius:12px;background:linear-gradient(90deg,#51a2ff,#615fff);box-shadow:0 2px 5px rgba(99,102,241,.35);color:#fff;font-size:10px;font-weight:700;line-height:23px;padding-left:11px">Rented<span class="abs" style="left:52px;top:4px;width:24px;height:15px;border-radius:7px;background:rgba(255,255,255,.25);text-align:center;line-height:15px">12</span></div>
 <div class="abs" style="left:1438px;top:24px;width:73px;height:23px;border-radius:12px;background:linear-gradient(90deg,#10c981,#0fbf6a);box-shadow:0 2px 5px rgba(16,185,129,.35);color:#fff;font-size:10px;font-weight:700;line-height:23px;padding-left:11px">Free<span class="abs" style="left:38px;top:4px;width:23px;height:15px;border-radius:7px;background:rgba(255,255,255,.25);text-align:center;line-height:15px">17</span></div>
 <div class="abs" style="left:1523px;top:24px;width:24px;height:24px;border-radius:50%;background:#fff;border:1px solid #bedbff;box-shadow:0 1px 2px rgba(0,0,0,.06)"><svg class="abs" style="left:5px;top:5px" width="12" height="12" viewBox="0 0 12 12" fill="none" stroke="#1447e6" stroke-width="1.6"><path d="M1.5 6h8.5M6.5 2.5L10 6l-3.5 3.5"/></svg></div>
 <div class="r" style="top:70px"><div class="pl">VMQ 1695<span class="mc">Perodua Bezza</span></div><div class="cl"><span>Client:</span> MAIMON BINTI SEMION</div><div class="du">1d 04h</div><div class="wa"><svg width="20" height="20" viewBox="0 0 24 24" fill="none" stroke="#00a63e" stroke-width="1.8" stroke-linejoin="round"><path d="M3.5 20.5l1.3-4.2A9 9 0 1112 21a9 9 0 01-4.3-1.1z"/><path d="M9 8.5c0 3.5 3 6.5 6.5 6.5l1-1.3-2-1-.8.8c-1-.4-2.3-1.7-2.8-2.8l.8-.8-1-2L9.5 8z" stroke-width="1.3"/></svg></div><div class="op">OPEN</div></div>
 <div class="r" style="top:135px"><div class="pl">QRT 3602<span class="mc">Honda City RS</span></div><div class="cl"><span>Client:</span> REDZAINI BINTI RADZUAN</div><div class="du">1d 14h</div><div class="wa"><svg width="20" height="20" viewBox="0 0 24 24" fill="none" stroke="#00a63e" stroke-width="1.8" stroke-linejoin="round"><path d="M3.5 20.5l1.3-4.2A9 9 0 1112 21a9 9 0 01-4.3-1.1z"/><path d="M9 8.5c0 3.5 3 6.5 6.5 6.5l1-1.3-2-1-.8.8c-1-.4-2.3-1.7-2.8-2.8l.8-.8-1-2L9.5 8z" stroke-width="1.3"/></svg></div><div class="op">OPEN</div></div>
 <div class="r" style="top:200px"><div class="pl">QDA 7102<span class="mc">Toyota Yaris</span></div><div class="cl"><span>Client:</span> RASYIDAH BINTI MOKHTAR</div><div class="du">2d 09h</div><div class="wa"><svg width="20" height="20" viewBox="0 0 24 24" fill="none" stroke="#00a63e" stroke-width="1.8" stroke-linejoin="round"><path d="M3.5 20.5l1.3-4.2A9 9 0 1112 21a9 9 0 01-4.3-1.1z"/><path d="M9 8.5c0 3.5 3 6.5 6.5 6.5l1-1.3-2-1-.8.8c-1-.4-2.3-1.7-2.8-2.8l.8-.8-1-2L9.5 8z" stroke-width="1.3"/></svg></div><div class="op">OPEN</div></div>
 <div class="r" style="top:265px"><div class="pl">VLA 1535<span class="mc">Toyota Vios</span></div><div class="cl"><span>Client:</span> RUDY SHAHRIMAN BIN MOHD AMIN</div><div class="du">2d 10h</div><div class="wa"><svg width="20" height="20" viewBox="0 0 24 24" fill="none" stroke="#00a63e" stroke-width="1.8" stroke-linejoin="round"><path d="M3.5 20.5l1.3-4.2A9 9 0 1112 21a9 9 0 01-4.3-1.1z"/><path d="M9 8.5c0 3.5 3 6.5 6.5 6.5l1-1.3-2-1-.8.8c-1-.4-2.3-1.7-2.8-2.8l.8-.8-1-2L9.5 8z" stroke-width="1.3"/></svg></div><div class="op">OPEN</div></div>
 <div class="r" style="top:330px"><div class="pl">QBG 7102<span class="mc">Toyota Yaris</span></div><div class="cl"><span>Client:</span> AINA MARDIAH BINTI FERDAUS</div><div class="du">4d 13h</div><div class="wa"><svg width="20" height="20" viewBox="0 0 24 24" fill="none" stroke="#00a63e" stroke-width="1.8" stroke-linejoin="round"><path d="M3.5 20.5l1.3-4.2A9 9 0 1112 21a9 9 0 01-4.3-1.1z"/><path d="M9 8.5c0 3.5 3 6.5 6.5 6.5l1-1.3-2-1-.8.8c-1-.4-2.3-1.7-2.8-2.8l.8-.8-1-2L9.5 8z" stroke-width="1.3"/></svg></div><div class="op">OPEN</div></div>
 <div class="r" style="top:395px"><div class="pl">VFD 8440<span class="mc">Honda BR-V</span></div><div class="cl"><span>Client:</span> ALAM JANI</div><div class="du">5d 08h</div><div class="wa"><svg width="20" height="20" viewBox="0 0 24 24" fill="none" stroke="#00a63e" stroke-width="1.8" stroke-linejoin="round"><path d="M3.5 20.5l1.3-4.2A9 9 0 1112 21a9 9 0 01-4.3-1.1z"/><path d="M9 8.5c0 3.5 3 6.5 6.5 6.5l1-1.3-2-1-.8.8c-1-.4-2.3-1.7-2.8-2.8l.8-.8-1-2L9.5 8z" stroke-width="1.3"/></svg></div><div class="op">OPEN</div></div>
 <div class="r" style="top:460px"><div class="pl">NCK 7102<span class="mc">Proton Exora</span></div><div class="cl"><span>Client:</span> ABDUL HAMEED HABEEB MOHAMMED</div><div class="du">5d 14h</div><div class="wa"><svg width="20" height="20" viewBox="0 0 24 24" fill="none" stroke="#00a63e" stroke-width="1.8" stroke-linejoin="round"><path d="M3.5 20.5l1.3-4.2A9 9 0 1112 21a9 9 0 01-4.3-1.1z"/><path d="M9 8.5c0 3.5 3 6.5 6.5 6.5l1-1.3-2-1-.8.8c-1-.4-2.3-1.7-2.8-2.8l.8-.8-1-2L9.5 8z" stroke-width="1.3"/></svg></div><div class="op">OPEN</div></div>
 <div class="r" style="top:525px"><div class="pl">QRT 3601<span class="mc">Honda City RS</span></div><div class="cl"><span>Client:</span> CHONG FOOK YOONG</div><div class="du">6d 14h</div><div class="wa"><svg width="20" height="20" viewBox="0 0 24 24" fill="none" stroke="#00a63e" stroke-width="1.8" stroke-linejoin="round"><path d="M3.5 20.5l1.3-4.2A9 9 0 1112 21a9 9 0 01-4.3-1.1z"/><path d="M9 8.5c0 3.5 3 6.5 6.5 6.5l1-1.3-2-1-.8.8c-1-.4-2.3-1.7-2.8-2.8l.8-.8-1-2L9.5 8z" stroke-width="1.3"/></svg></div><div class="op">OPEN</div></div>
 <div class="r" style="top:590px"><div class="pl">VNH 3600<span class="mc">Toyota Vios</span></div><div class="cl"><span>Client:</span> FAKHRUL HADI BIN PARIDUL ADRAS</div><div class="du">11d 13h</div><div class="wa"><svg width="20" height="20" viewBox="0 0 24 24" fill="none" stroke="#00a63e" stroke-width="1.8" stroke-linejoin="round"><path d="M3.5 20.5l1.3-4.2A9 9 0 1112 21a9 9 0 01-4.3-1.1z"/><path d="M9 8.5c0 3.5 3 6.5 6.5 6.5l1-1.3-2-1-.8.8c-1-.4-2.3-1.7-2.8-2.8l.8-.8-1-2L9.5 8z" stroke-width="1.3"/></svg></div><div class="op">OPEN</div></div>
 <div class="r" style="top:655px"><div class="pl">VNH 4404<span class="mc">Toyota Vios</span></div><div class="cl"><span>Client:</span> YOUNGCHOON KO</div><div class="du">17d 12h</div><div class="wa"><svg width="20" height="20" viewBox="0 0 24 24" fill="none" stroke="#00a63e" stroke-width="1.8" stroke-linejoin="round"><path d="M3.5 20.5l1.3-4.2A9 9 0 1112 21a9 9 0 01-4.3-1.1z"/><path d="M9 8.5c0 3.5 3 6.5 6.5 6.5l1-1.3-2-1-.8.8c-1-.4-2.3-1.7-2.8-2.8l.8-.8-1-2L9.5 8z" stroke-width="1.3"/></svg></div><div class="op">OPEN</div></div>
 <div class="r" style="top:720px"><div class="pl">SK 1461 G<span class="mc">Honda Civic FE</span></div><div class="cl"><span>Client:</span> GI HO KANG</div><div class="du">24d 20h</div><div class="wa"><svg width="20" height="20" viewBox="0 0 24 24" fill="none" stroke="#00a63e" stroke-width="1.8" stroke-linejoin="round"><path d="M3.5 20.5l1.3-4.2A9 9 0 1112 21a9 9 0 01-4.3-1.1z"/><path d="M9 8.5c0 3.5 3 6.5 6.5 6.5l1-1.3-2-1-.8.8c-1-.4-2.3-1.7-2.8-2.8l.8-.8-1-2L9.5 8z" stroke-width="1.3"/></svg></div><div class="op">OPEN</div></div>
 <div class="r" style="top:785px;border-bottom:0"><div class="pl">BRQ 7692<span class="mc">Honda Civic FC</span></div><div class="cl"><span>Client:</span> REDZAINI BINTI RADZUAN</div><div class="du">27d 21h</div><div class="wa"><svg width="20" height="20" viewBox="0 0 24 24" fill="none" stroke="#00a63e" stroke-width="1.8" stroke-linejoin="round"><path d="M3.5 20.5l1.3-4.2A9 9 0 1112 21a9 9 0 01-4.3-1.1z"/><path d="M9 8.5c0 3.5 3 6.5 6.5 6.5l1-1.3-2-1-.8.8c-1-.4-2.3-1.7-2.8-2.8l.8-.8-1-2L9.5 8z" stroke-width="1.3"/></svg></div><div class="op">OPEN</div></div>
</div>
</body></html>
